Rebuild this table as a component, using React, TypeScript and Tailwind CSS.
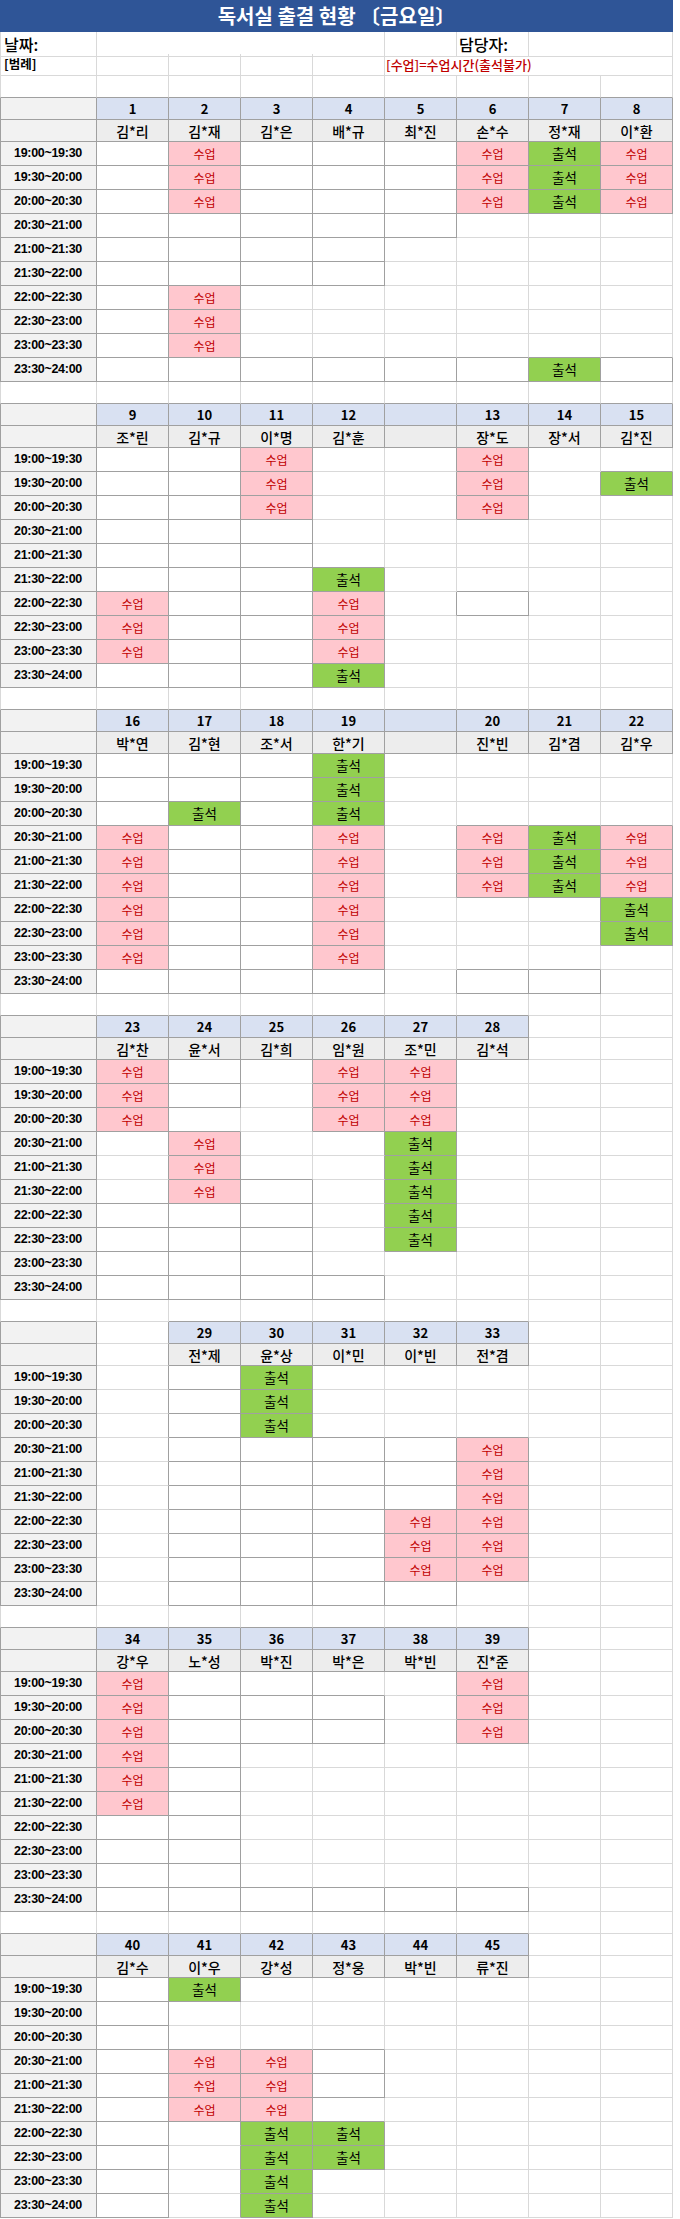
import clsx from 'clsx';

type Kind = 'plain' | 'label' | 'time' | 'num' | 'name' | 'class' | 'attend';
type Cell = { kind: Kind; text?: string; dark: boolean };
type Row = { tall: boolean; cells: Cell[] };
type Section = {
  seats: (number | '' | null)[];
  names: string[];
  grid: string[];
  dark: string[];
};

const TIMES = [
  '19:00~19:30',
  '19:30~20:00',
  '20:00~20:30',
  '20:30~21:00',
  '21:00~21:30',
  '21:30~22:00',
  '22:00~22:30',
  '22:30~23:00',
  '23:00~23:30',
  '23:30~24:00',
];

// x = 수업, o = 출석 ; dark = 진한 테두리
const SECTIONS: Section[] = [
  {
    seats: [1, 2, 3, 4, 5, 6, 7, 8],
    names: ['김*리', '김*재', '김*은', '배*규', '최*진', '손*수', '정*재', '이*환'],
    grid: ['.x...xox', '.x...xox', '.x...xox', '........', '........', '........', '.x......', '.x......', '.x......', '......o.'],
    dark: ['11111111', '11111111', '11111111', '11111000', '11110000', '11110000', '11000000', '11000000', '11000000', '11111111'],
  },
  {
    seats: [9, 10, 11, 12, '', 13, 14, 15],
    names: ['조*린', '김*규', '이*명', '김*훈', '', '장*도', '장*서', '김*진'],
    grid: ['..x..x..', '..x..x.o', '..x..x..', '........', '........', '...o....', 'x..x....', 'x..x....', 'x..x....', '...o....'],
    dark: ['11100000', '11100000', '11100000', '11100000', '11100000', '11100000', '11100100', '11100000', '11100000', '11100000'],
  },
  {
    seats: [16, 17, 18, 19, '', 20, 21, 22],
    names: ['박*연', '김*현', '조*서', '한*기', '', '진*빈', '김*겸', '김*우'],
    grid: ['...o....', '...o....', '.o.o....', 'x..x.xox', 'x..x.xox', 'x..x.xox', 'x..x...o', 'x..x...o', 'x..x....', '........'],
    dark: ['11110000', '11110000', '11110000', '11110000', '11110000', '11110000', '11110000', '11110000', '11110000', '11110110'],
  },
  {
    seats: [23, 24, 25, 26, 27, 28, null, null],
    names: ['김*찬', '윤*서', '김*희', '임*원', '조*민', '김*석', '', ''],
    grid: ['x..xx...', 'x..xx...', 'x..xx...', '.x..o...', '.x..o...', '.x..o...', '....o...', '....o...', '........', '........'],
    dark: ['11000000', '11000000', '10000000', '01000000', '01000000', '01100000', '11100000', '11100000', '11100000', '11110000'],
  },
  {
    seats: [null, 29, 30, 31, 32, 33, null, null],
    names: ['', '전*제', '윤*상', '이*민', '이*빈', '전*겸', '', ''],
    grid: ['..o.....', '..o.....', '..o.....', '.....x..', '.....x..', '.....x..', '....xx..', '....xx..', '....xx..', '........'],
    dark: ['01000000', '01000000', '01000000', '01111000', '01111000', '01111000', '01110000', '01110000', '01110000', '01111000'],
  },
  {
    seats: [34, 35, 36, 37, 38, 39, null, null],
    names: ['강*우', '노*성', '박*진', '박*은', '박*빈', '진*준', '', ''],
    grid: ['x....x..', 'x....x..', 'x....x..', 'x.......', 'x.......', 'x.......', '........', '........', '........', '........'],
    dark: ['11100000', '11110000', '11110000', '11000000', '11000000', '11000000', '11000000', '11000000', '11000000', '11111100'],
  },
  {
    seats: [40, 41, 42, 43, 44, 45, null, null],
    names: ['김*수', '이*우', '강*성', '정*웅', '박*빈', '류*진', '', ''],
    grid: ['.o......', '........', '........', '.xx.....', '.xx.....', '.xx.....', '..oo....', '..oo....', '..o.....', '..o.....'],
    dark: ['10000000', '10000000', '10000000', '10010000', '10010000', '10000000', '10000000', '10000000', '10000000', '10000000'],
  },
];

const KIND: Record<Kind, string> = {
  plain: 'bg-white',
  label: 'bg-[#f2f2f2]',
  time: "bg-[#f2f2f2] justify-start pl-[13px] font-bold text-[12.5px] tracking-[-0.3px] font-['Liberation_Sans_Narrow','Liberation_Sans',sans-serif]",
  num: 'bg-[#d9e1f2] font-bold text-[13px]',
  name: 'bg-[#ededed] text-[14px] font-medium',
  class: 'bg-[#ffc7ce] text-[#c00000] text-[12px]',
  attend: 'bg-[#92d050] text-[13.5px]',
};

function blankRow(): Row {
  return { tall: false, cells: Array.from({ length: 9 }, () => ({ kind: 'plain' as Kind, dark: false })) };
}

function buildRows(): Row[] {
  const rows: Row[] = [blankRow()];
  SECTIONS.forEach((s, i) => {
    rows.push({
      tall: false,
      cells: [
        { kind: 'label', dark: true },
        ...s.seats.map((seat): Cell =>
          seat === null ? { kind: 'plain', dark: false } : { kind: 'num', text: String(seat), dark: true },
        ),
      ],
    });
    rows.push({
      tall: false,
      cells: [
        { kind: 'label', dark: true },
        ...s.seats.map((seat, c): Cell =>
          seat === null ? { kind: 'plain', dark: false } : { kind: 'name', text: s.names[c], dark: true },
        ),
      ],
    });
    TIMES.forEach((time, r) => {
      const cells: Cell[] = [{ kind: 'time', text: time, dark: true }];
      for (let c = 0; c < 8; c++) {
        const mark = s.grid[r][c];
        if (mark === 'x') cells.push({ kind: 'class', text: '수업', dark: true });
        else if (mark === 'o') cells.push({ kind: 'attend', text: '출석', dark: true });
        else cells.push({ kind: 'plain', dark: s.dark[r][c] === '1' });
      }
      rows.push({ tall: true, cells });
    });
    if (i < SECTIONS.length - 1) rows.push(blankRow());
  });
  return rows;
}

const LIGHT_CELL = 'border-r border-b border-r-[#d9d9d9] border-b-[#d9d9d9]';

export default function App() {
  const rows = buildRows();

  return (
    <div className="w-[680px] bg-white text-black font-['Noto_Sans_CJK_KR',sans-serif]">
      <div className="w-[673px]">
        <div className="flex h-[32px] items-center justify-center bg-[#2f5597] text-[20px] font-bold text-white">
          독서실 출결 현황 〔금요일〕
        </div>

        <div className="grid h-[22px] grid-cols-[97px_288px_72px_72px_144px]">
          <div className={clsx(LIGHT_CELL, 'flex items-center border-l border-l-[#d9d9d9] pl-[3px] text-[16px] font-medium')}>
            날짜:
          </div>
          <div className={LIGHT_CELL} />
          <div className={LIGHT_CELL} />
          <div className={clsx(LIGHT_CELL, 'flex items-center pl-[2px] text-[16px] font-medium whitespace-nowrap')}>
            담당자:
          </div>
          <div className={LIGHT_CELL} />
        </div>

        <div className="grid h-[22px] grid-cols-[97px_72px_72px_72px_72px_288px]">
          <div className={clsx(LIGHT_CELL, 'flex items-center border-l border-l-[#d9d9d9] pl-[3px] text-[12.5px] font-bold')}>
            [범례]
          </div>
          <div className={LIGHT_CELL} />
          <div className={LIGHT_CELL} />
          <div className={LIGHT_CELL} />
          <div className={LIGHT_CELL} />
          <div className={clsx(LIGHT_CELL, 'flex items-center pl-[1px] text-[13px] font-medium text-[#c00000]')}>
            [수업]=수업시간(출석불가)
          </div>
        </div>

        {rows.map((row, r) => (
          <div
            key={r}
            className={clsx('grid grid-cols-[97px_repeat(8,72px)]', row.tall ? 'h-[24px]' : 'h-[22px]')}
          >
            {row.cells.map((cell, c) => {
              const right = cell.dark || (row.cells[c + 1]?.dark ?? false);
              const below = cell.dark || (rows[r + 1]?.cells[c].dark ?? false);
              return (
                <div
                  key={c}
                  className={clsx(
                    'flex items-center justify-center border-r border-b leading-none whitespace-nowrap',
                    right ? 'border-r-[#a0a0a0]' : 'border-r-[#d9d9d9]',
                    below ? 'border-b-[#a0a0a0]' : 'border-b-[#d9d9d9]',
                    c === 0 && 'border-l',
                    c === 0 && (cell.dark ? 'border-l-[#a0a0a0]' : 'border-l-[#d9d9d9]'),
                    KIND[cell.kind],
                  )}
                >
                  {cell.text}
                </div>
              );
            })}
          </div>
        ))}
      </div>
    </div>
  );
}
